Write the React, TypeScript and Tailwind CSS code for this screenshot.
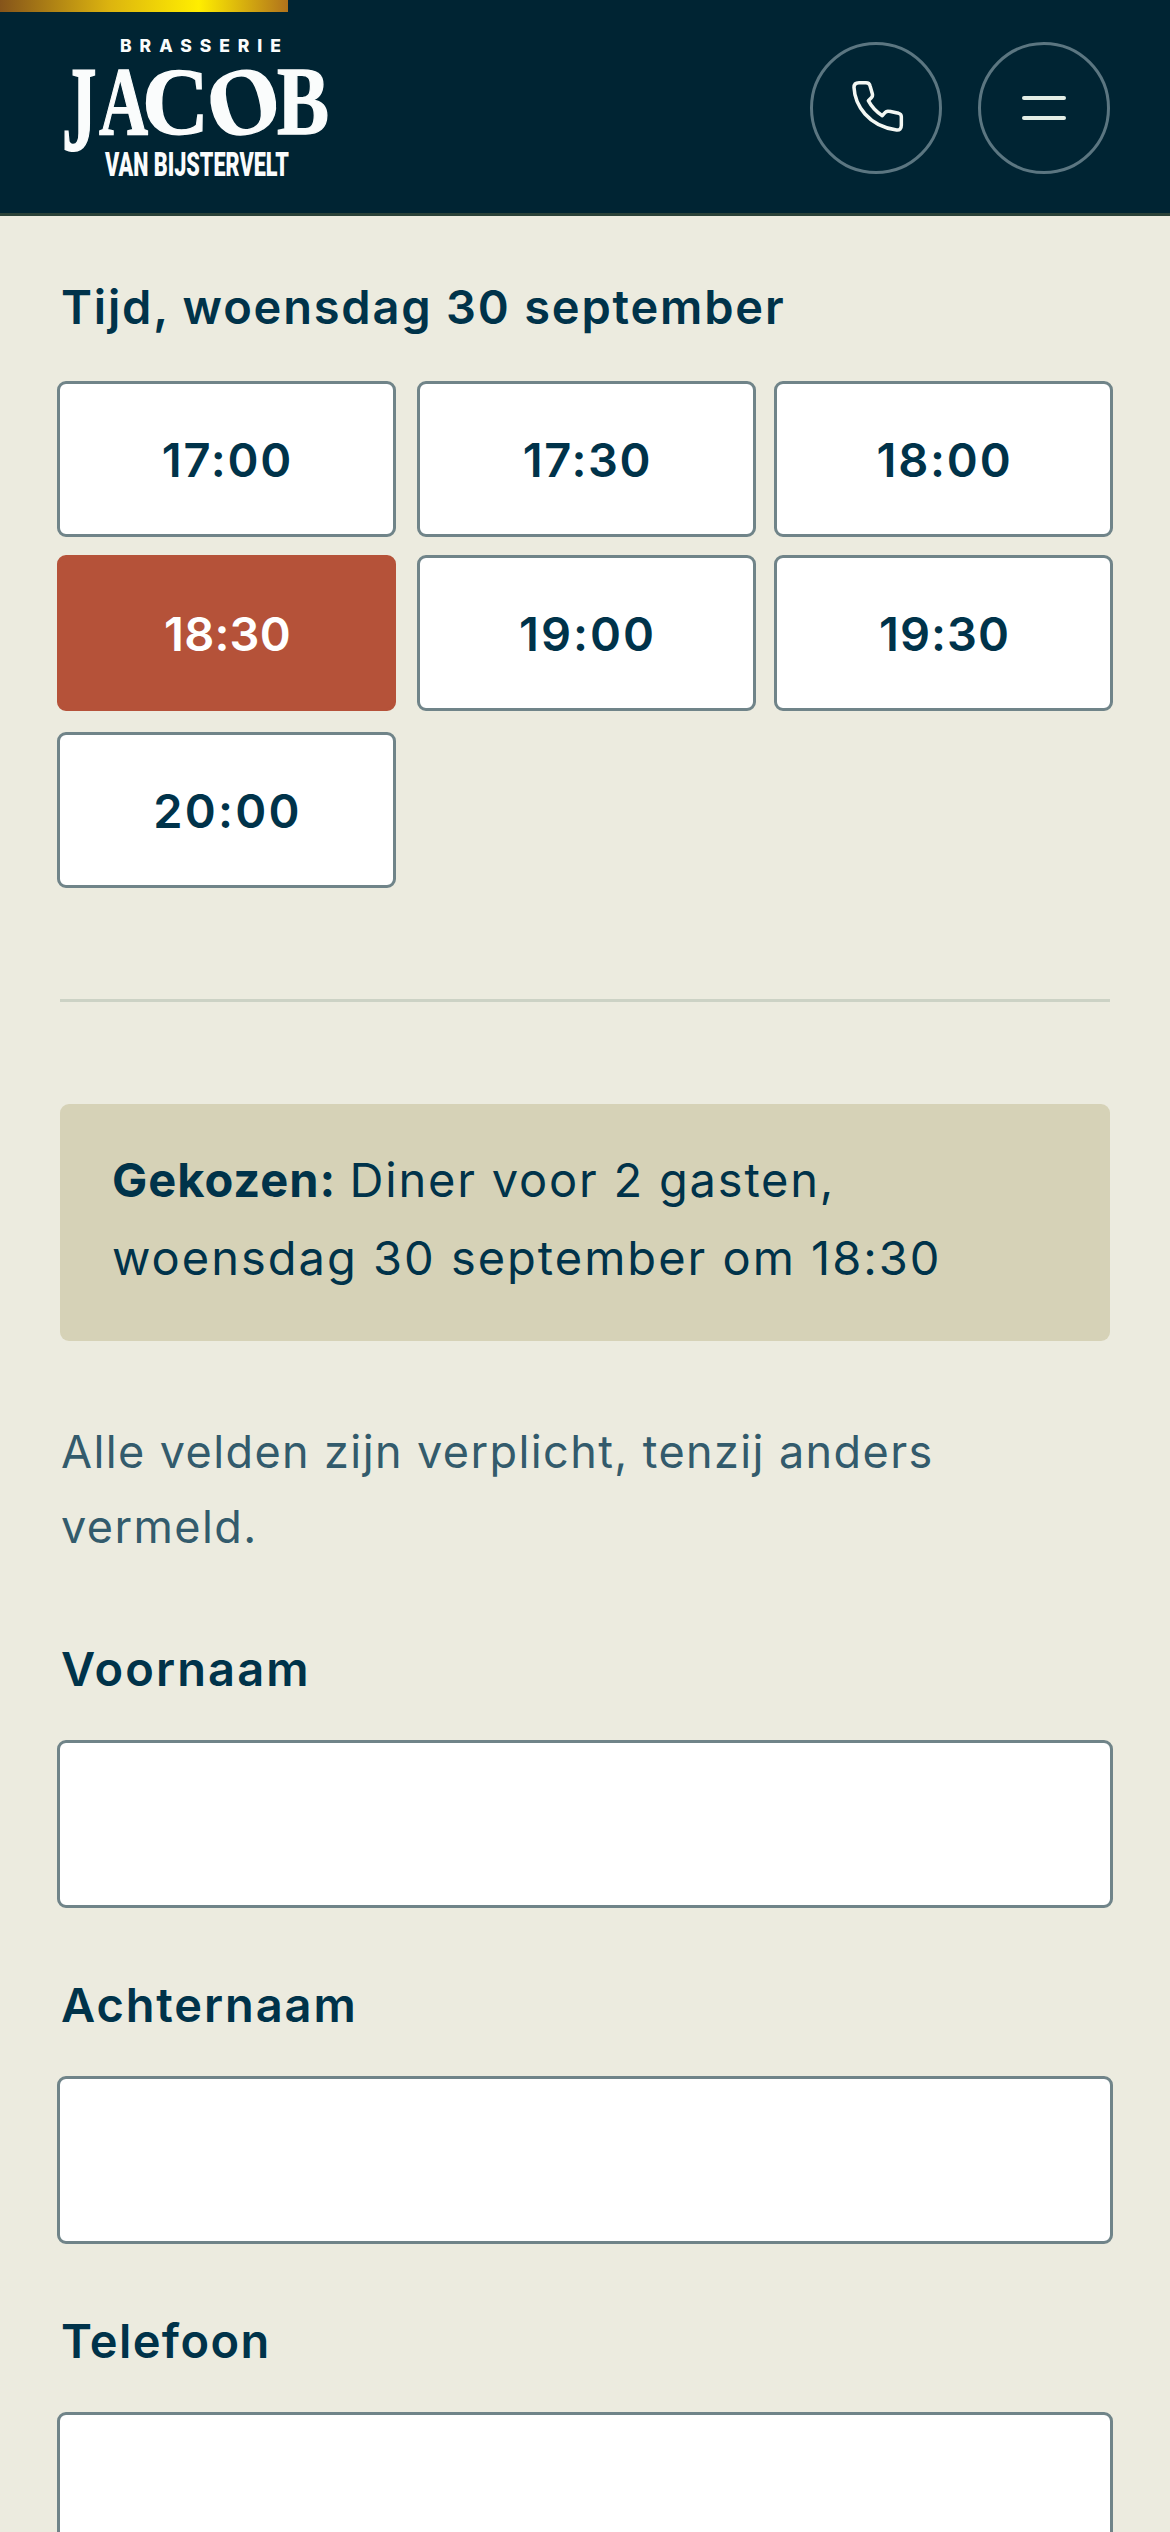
import React, { useState } from "react";
import clsx from "clsx";

const times = [
  { value: "17:00", tracking: "tracking-[1.8px]" },
  { value: "17:30", tracking: "tracking-[1.6px]" },
  { value: "18:00", tracking: "tracking-[1.8px]" },
  { value: "18:30", tracking: "tracking-[0.2px]" },
  { value: "19:00", tracking: "tracking-[2px]" },
  { value: "19:30", tracking: "tracking-[1px]" },
  { value: "20:00", tracking: "tracking-[2.2px]" },
];

const fields = [
  { name: "firstName", label: "Voornaam", tracking: "tracking-[2.1px]" },
  { name: "lastName", label: "Achternaam", tracking: "tracking-[1.9px]" },
  { name: "phone", label: "Telefoon", tracking: "tracking-[1.4px]" },
];

function Logo() {
  return (
    <svg
      width="300"
      height="200"
      viewBox="50 12 300 200"
      className="shrink-0 overflow-visible fill-[#fafcfc]"
      aria-label="Brasserie Jacob van Bijstervelt"
    >
      <text
        x="120"
        y="52"
        textLength="161"
        className="font-['Inter'] text-[17.5px] font-extrabold"
      >
        BRASSERIE
      </text>
      <g className="stroke-[#fafcfc] stroke-[1.5] font-['Liberation_Serif'] text-[100px] font-bold">
        <text transform="translate(62 150) scale(0.69 1.2)">J</text>
        <text transform="translate(99 134) scale(0.68 0.97)">A</text>
        <text transform="translate(142 133.5) scale(0.93 0.95)">C</text>
        <text transform="rotate(-14 244 102) translate(207 133.5) scale(0.93 0.95)">
          O
        </text>
        <text transform="translate(277 134) scale(0.78 0.98)">B</text>
      </g>
      <text
        x="105"
        y="175.5"
        textLength="184"
        lengthAdjust="spacingAndGlyphs"
        className="font-['Roboto'] text-[33.5px] font-black"
      >
        VAN BIJSTERVELT
      </text>
    </svg>
  );
}

function Header() {
  return (
    <header className="h-[216px] border-b-[3px] border-[#2b4239] bg-[#002433]">
      <div className="h-3 w-[288px] bg-[linear-gradient(90deg,#85541a_0%,#dcb40f_38%,#ffee00_69%,#b0721c_100%)]" />
      <div className="flex items-start justify-between pr-[60px] pl-[50px]">
        <Logo />
        <div className="flex gap-9 pt-[30px]">
          <button
            aria-label="Bellen"
            className="flex size-[132px] items-center justify-center rounded-full border-[3px] border-[#5b7681]"
          >
            <svg
              width="58"
              height="58"
              viewBox="201 237 174 174"
              className="fill-none stroke-[#f3f7f3] stroke-[10.5]"
              strokeLinejoin="round"
            >
              <path d="M237 248H258Q268 248 270 257L277 281Q279 288 274 293L265 302Q280 330 307 347L315 338Q320 332 328 334L356 340Q364 342 364 350V376Q364 391 350 390Q290 382 255 342Q224 306 222 262Q222 248 237 248Z" />
            </svg>
          </button>
          <button
            aria-label="Menu"
            className="flex size-[132px] flex-col items-center justify-center gap-4 rounded-full border-[3px] border-[#5b7681]"
          >
            <span className="h-1 w-11 rounded-full bg-[#e3ede5]" />
            <span className="h-1 w-11 rounded-full bg-[#e3ede5]" />
          </button>
        </div>
      </div>
    </header>
  );
}

export default function App() {
  const [time, setTime] = useState("18:30");

  return (
    <div className="h-[2532px] w-[1170px] overflow-hidden bg-[#ecebdf] font-['Inter',sans-serif] text-[#00334a]">
      <Header />
      <main className="px-[57px]">
        <h2 className="mt-[52px] pl-1 text-[47px] leading-[78px] font-semibold tracking-[1.8px] whitespace-nowrap">
          Tijd, woensdag 30 september
        </h2>
        <div className="mt-[35px] grid grid-cols-[360px_357px_339px] grid-rows-[174px_177px_156px]">
          {times.map((t) => (
            <button
              key={t.value}
              onClick={() => setTime(t.value)}
              className={clsx(
                "flex h-[156px] w-[339px] items-center justify-center rounded-[9px] border-[3px] pt-0.5 pl-0.5 text-[47px] font-semibold",
                t.tracking,
                t.value === time
                  ? "border-[#b55239] bg-[#b55239] text-white"
                  : "border-[#708489] bg-white",
              )}
            >
              {t.value}
            </button>
          ))}
        </div>

        <hr className="mx-[3px] mt-[111px] border-t-[3px] border-[#ccd2c5]" />

        <p className="mx-[3px] mt-[102px] h-[237px] rounded-[9px] bg-[#d6d2b7] pt-[37px] pl-[52px] text-[47px] leading-[78px] whitespace-nowrap">
          <b className="font-bold tracking-[1px]">Gekozen:</b>{" "}
          <span className="tracking-[1.8px]">Diner voor 2 gasten,</span>
          <br />
          <span className="tracking-[2px]">woensdag 30 september om 18:30</span>
        </p>

        <p className="mt-[73px] pl-1 text-[45px] leading-[75px] font-[380] tracking-[1.4px] text-[#335b6c]">
          Alle velden zijn verplicht, tenzij anders
          <br />
          vermeld.
        </p>

        <form className="mt-[66px]">
          {fields.map((field) => (
            <label key={field.name} className="block h-[336px]">
              <span
                className={clsx(
                  "block h-[110px] pl-1 text-[47px] leading-[78px] font-semibold",
                  field.tracking,
                )}
              >
                {field.label}
              </span>
              <input
                name={field.name}
                className="block h-[168px] w-full rounded-[9px] border-[3px] border-[#708489] bg-white px-10 text-[47px]"
              />
            </label>
          ))}
        </form>
      </main>
    </div>
  );
}
